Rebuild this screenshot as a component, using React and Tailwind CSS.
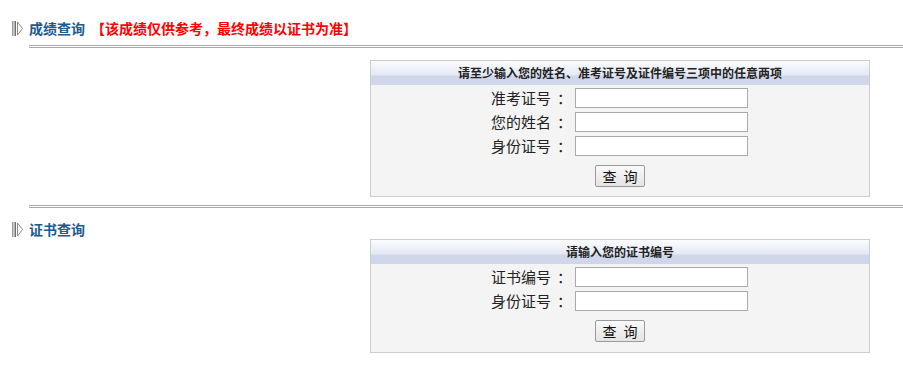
const font = { fontFamily: '"Microsoft YaHei", "Noto Sans CJK SC", "Noto Sans", sans-serif' };

const Arrow = () => (
  <svg width="11" height="15" viewBox="0 0 11 15" className="shrink-0">
    <rect x="0" y="0" width="1.5" height="15" fill="#9a9a9a" />
    <rect x="2.5" y="0" width="1.5" height="15" fill="#6f6f6f" />
    <path d="M5.5 1 L10.5 7.5 L5.5 14 Z" fill="#fff" stroke="#8a8a8a" strokeWidth="1" />
  </svg>
);

const SectionTitle = ({ children, note }) => (
  <div className="flex items-center h-[16px] pl-[12px] gap-[6px] [text-spacing-trim:space-all]">
    <Arrow />
    <span className="text-[14px] leading-[16px] font-bold text-[#1d5b8f]">{children}</span>
    {note && (
      <span className="text-[14px] leading-[16px] font-bold text-[#ff0000]">{note}</span>
    )}
  </div>
);

const DoubleLine = ({ className }) => (
  <div className={`ml-[29px] h-[3px] border-t border-b border-[#a9a9a9] ${className}`} />
);

const Field = ({ label }) => (
  <div className="flex items-center h-[20px]">
    <label className="w-[201px] flex justify-end text-[15px] leading-[20px] text-[#222]">
      <span>{label}</span>
      <span className="pl-[6px] w-[21px]">：</span>
    </label>
    <input className="ml-[3px] w-[173px] h-[20px] border border-[#aaaaaa] bg-white outline-none" />
  </div>
);

const Panel = ({ title, fields, className, pb = 'pb-[9px]' }) => (
  <div className={`ml-[370px] w-[500px] border border-[#cccccc] bg-[#f4f4f4] ${className}`}>
    <div className="h-[24px] bg-[linear-gradient(to_bottom,#fbfcfe_0%,#e4e8f4_60%,#d0d7eb_61%,#d0d7eb_100%)] text-center text-[12px] leading-[24px] font-bold text-[#222]">
      {title}
    </div>
    <div className="flex flex-col gap-[4px] pt-[3px]">
      {fields.map((f) => (
        <Field key={f} label={f} />
      ))}
    </div>
    <div className={`flex justify-center pt-[9px] ${pb}`}>
      <button className="flex items-center justify-center gap-[7px] w-[50px] h-[22px] border border-[#9a9a9a] rounded-[2px] bg-[linear-gradient(to_bottom,#fafafa,#e4e4e4)] text-[14px] leading-[20px] text-[#111]">
        <span>查</span>
        <span>询</span>
      </button>
    </div>
  </div>
);

export default function App() {
  return (
    <div className="w-[903px] h-[389px] bg-white pt-[20px] overflow-hidden" style={font}>
      <SectionTitle note="【该成绩仅供参考，最终成绩以证书为准】">成绩查询</SectionTitle>
      <DoubleLine className="mt-[9px]" />
      <Panel
        className="mt-[12px]"
        title="请至少输入您的姓名、准考证号及证件编号三项中的任意两项"
        fields={['准考证号', '您的姓名', '身份证号']}
      />
      <DoubleLine className="mt-[8px]" />
      <div className="mt-[13px]">
        <SectionTitle>证书查询</SectionTitle>
      </div>
      <Panel
        className="mt-[2px]"
        pb="pb-[10px]"
        title="请输入您的证书编号"
        fields={['证书编号', '身份证号']}
      />
    </div>
  );
}
